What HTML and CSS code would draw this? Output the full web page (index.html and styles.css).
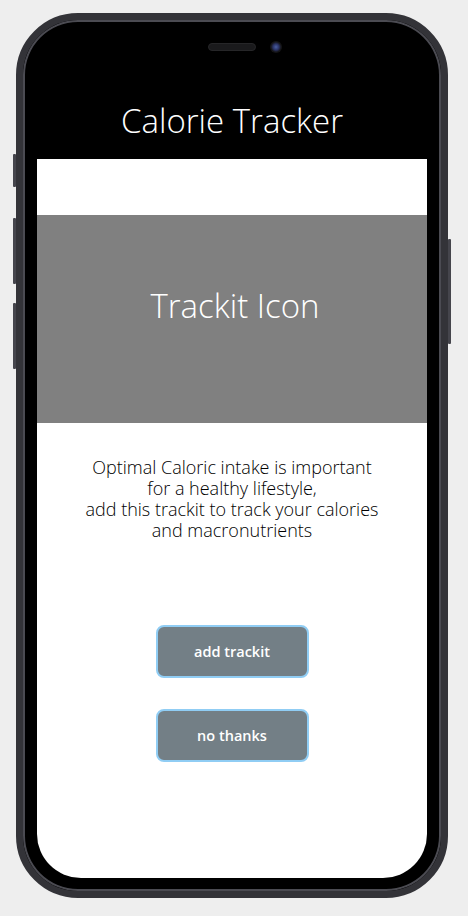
FILE: index.html
```html
<!DOCTYPE html>
<html>
<head>
  <title>Calorie Tracker</title>
  <link rel="stylesheet" href="styles.css">
</head>
<body>
  <div class="phone">
    <span class="side-btn mute"></span>
    <span class="side-btn vol-up"></span>
    <span class="side-btn vol-down"></span>
    <span class="side-btn power"></span>

    <div class="top-bar">
      <div class="sensors">
        <span class="speaker"></span>
        <span class="camera"></span>
      </div>
      <h1>Calorie Tracker</h1>
    </div>

    <div class="screen">
      <div class="icon-box">Trackit Icon</div>

      <p class="blurb">
        Optimal Caloric intake is important<br>
        for a healthy lifestyle,<br>
        add this trackit to track your calories<br>
        and macronutrients
      </p>

      <div class="actions">
        <button type="button">add trackit</button>
        <button type="button">no thanks</button>
      </div>
    </div>
  </div>
</body>
</html>
```

FILE: styles.css
```css
body {
  margin: 0;
  background-color: #eeeeee;
  font-family: "Open Sans", sans-serif;
  display: flex;
  justify-content: center;
  padding: 13px 4px 0 0;
}

.phone {
  position: relative;
  width: 432px;
  height: 885px;
  box-sizing: border-box;
  border: 7px solid #333338;
  border-radius: 62px;
  background-color: #000;
  padding: 0 14px 13px 14px;
  display: flex;
  flex-direction: column;
  box-shadow: inset 0 0 0 2px #4b4b52;
}

.side-btn {
  position: absolute;
  width: 3px;
  background-color: #45454c;
  border-radius: 1px;
}

.mute {
  left: -10px;
  top: 134px;
  height: 33px;
}

.vol-up {
  left: -10px;
  top: 198px;
  height: 66px;
}

.vol-down {
  left: -10px;
  top: 283px;
  height: 66px;
}

.power {
  right: -10px;
  top: 219px;
  height: 105px;
}

.top-bar {
  height: 139px;
  display: flex;
  flex-direction: column;
  align-items: center;
}

.sensors {
  display: flex;
  align-items: center;
  gap: 14px;
  margin-top: 21px;
  margin-left: 26px;
}

.speaker {
  width: 46px;
  height: 6px;
  border-radius: 4px;
  background-color: #1a1a1c;
  border: 1px solid #262628;
}

.camera {
  width: 12px;
  height: 12px;
  border-radius: 50%;
  background: radial-gradient(circle at 50% 50%, #4a5fa0 0, #2a3366 35%, #141416 60%);
}

h1 {
  margin: 46px 0 0 0;
  color: #fff;
  font-weight: 300;
  font-size: 33px;
  line-height: 44px;
}

.screen {
  flex: 1;
  background-color: #fff;
  border-radius: 0 0 44px 44px;
  display: flex;
  flex-direction: column;
  align-items: center;
}

.icon-box {
  align-self: stretch;
  margin-top: 56px;
  height: 208px;
  box-sizing: border-box;
  padding: 0 0 28px 6px;
  background-color: #808080;
  color: #fff;
  font-size: 33px;
  font-weight: 300;
  display: flex;
  align-items: center;
  justify-content: center;
}

.blurb {
  margin: 34px 0 0 0;
  text-align: center;
  font-size: 18px;
  font-weight: 300;
  line-height: 21px;
  color: #000;
}

.actions {
  margin-top: 84px;
  display: flex;
  flex-direction: column;
  gap: 31px;
}

button {
  width: 153px;
  height: 53px;
  background-color: #737f86;
  color: #fff;
  border: 2px solid #90cdf4;
  border-radius: 8px;
  font-family: "Open Sans", sans-serif;
  font-weight: 600;
  font-size: 14.5px;
  cursor: pointer;
}
```
